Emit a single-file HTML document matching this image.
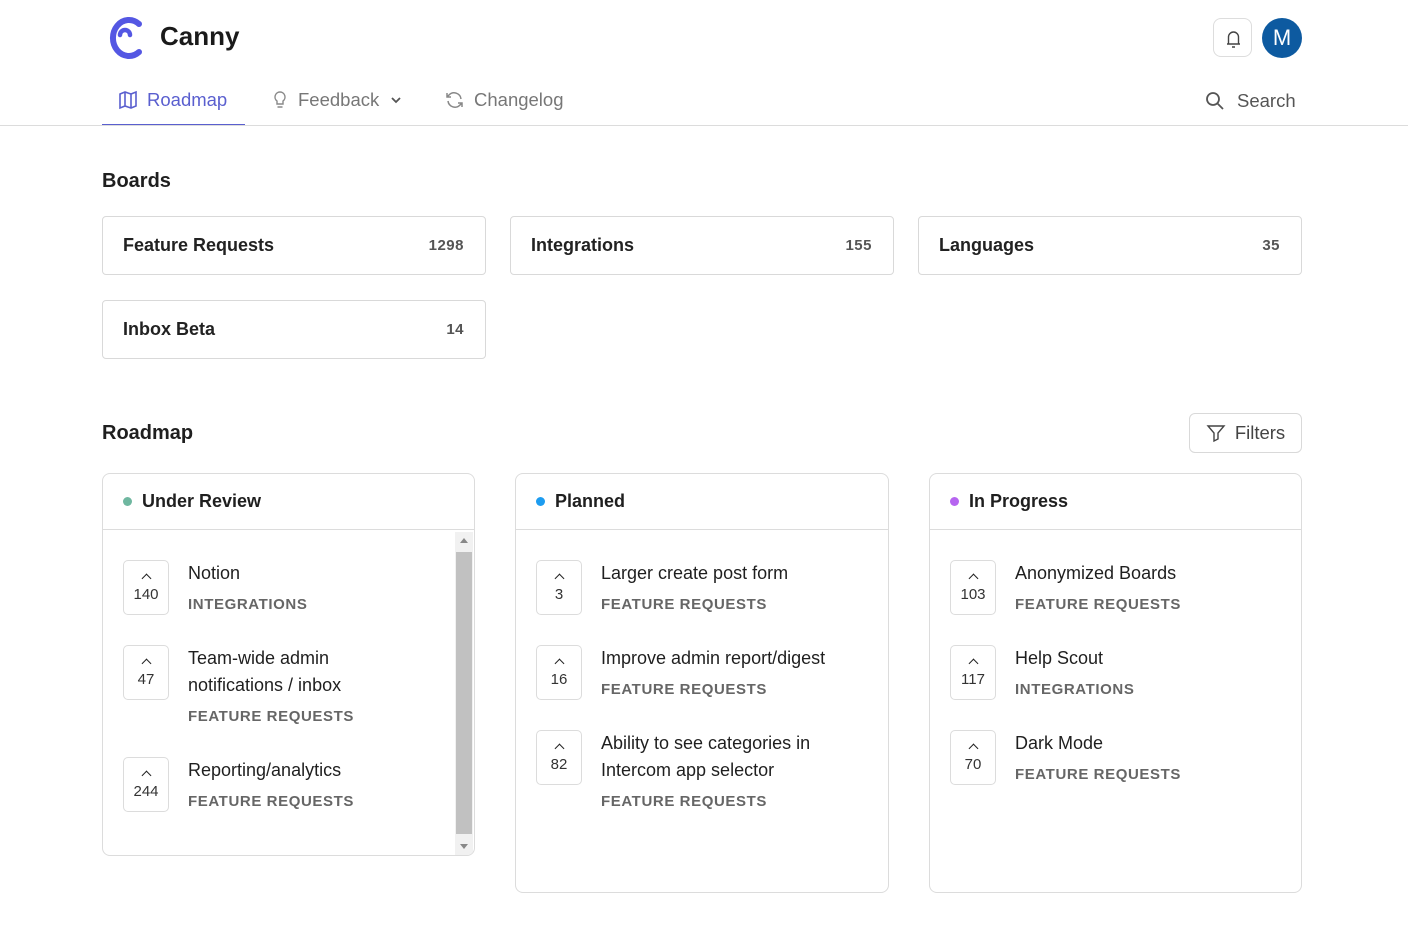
<!DOCTYPE html>
<html><head><meta charset="utf-8"><style>
*{box-sizing:border-box;margin:0;padding:0}
body{width:1408px;height:940px;background:#fff;font-family:"Liberation Sans",sans-serif;color:#1f1f1f;position:relative;overflow:hidden}
.a{position:absolute}
.nav{font-size:18.5px;color:#777;display:flex;align-items:center;gap:9px}
.board{position:absolute;width:384px;height:59px;border:1px solid #d9d9d9;border-radius:4px;display:flex;align-items:center;justify-content:space-between;padding:0 21px 0 20px;font-size:18px;font-weight:600;color:#222}
.board span{font-size:15px;color:#555;font-weight:700;letter-spacing:.5px}
.col{position:absolute;border:1px solid #dcdcdc;border-radius:8px;width:374px;overflow:hidden}
.ch{height:56px;border-bottom:1px solid #dcdcdc;display:flex;align-items:center;padding-left:20px;font-size:18px;font-weight:600;gap:10px}
.dot{width:9px;height:9px;border-radius:50%}
.it{position:absolute;left:20px}
.vote{position:absolute;left:0;top:0;width:46px;height:55px;border:1px solid #dcdcdc;border-radius:5px;text-align:center;font-size:15px;color:#333}
.vote i{display:block;width:7px;height:7px;border-left:1.6px solid #222;border-top:1.6px solid #222;transform:rotate(45deg);margin:14px auto 4px}
.t{position:absolute;left:65px;top:0px;font-size:18px;line-height:27px;color:#1f1f1f;width:260px}
.c{font-size:15px;font-weight:700;letter-spacing:.6px;color:#666;margin-top:8px;line-height:20px}
</style></head><body>
<svg class="a" style="left:105px;top:14px" width="40" height="48" viewBox="0 0 40 48"><path d="M34 10 A16 18 0 1 0 34 38" fill="none" stroke="#5457e3" stroke-width="6" stroke-linecap="round"/><path d="M15 21 A5 5 0 0 1 25 21" fill="none" stroke="#5457e3" stroke-width="4.5" stroke-linecap="round"/></svg>
<div class="a" style="left:160px;top:21px;font-size:26px;font-weight:600;color:#1a1a1a">Canny</div>
<div class="a" style="left:1213px;top:18px;width:39px;height:39px;border:1px solid #ddd;border-radius:8px"><svg width="39" height="39" viewBox="0 0 39 39"><path d="M13 25h13M14.5 25v-7a5 5 0 0 1 10 0v7M18 28h3" fill="none" stroke="#444" stroke-width="1.4"/></svg></div>
<div class="a" style="left:1262px;top:18px;width:40px;height:40px;border-radius:50%;background:#0d5aa0;color:#fff;font-size:22px;text-align:center;line-height:40px">M</div>
<div class="a nav" style="left:118px;top:89px;color:#5a5fcf"><svg width="20" height="20" viewBox="0 0 20 20" fill="none" stroke="#5a5fcf" stroke-width="1.6"><path d="M2 4l5-2 6 2 5-2v14l-5 2-6-2-5 2zM7 2v14M13 4v14"/></svg>Roadmap</div>
<div class="a" style="left:102px;top:124px;width:143px;height:2px;background:#5a5fcf"></div>
<div class="a nav" style="left:271px;top:89px"><svg width="18" height="20" viewBox="0 0 18 20" fill="none" stroke="#888" stroke-width="1.4"><path d="M9 2a5 5 0 0 0-3 9v3h6v-3a5 5 0 0 0-3-9zM6.5 17h5"/></svg>Feedback<svg width="16" height="16" viewBox="0 0 16 16"><path d="M4 6l4 4 4-4" fill="none" stroke="#555" stroke-width="1.8"/></svg></div>
<div class="a nav" style="left:444px;top:89px"><svg width="21" height="20" viewBox="0 0 21 20" fill="none" stroke="#888" stroke-width="1.5"><path d="M17 9a7 7 0 0 0-12-4L3 7M3 3v4h4M4 11a7 7 0 0 0 12 4l2-2M18 17v-4h-4"/></svg>Changelog</div>
<div class="a nav" style="left:1205px;top:90px;color:#555;gap:12px"><svg width="20" height="20" viewBox="0 0 20 20" fill="none" stroke="#555" stroke-width="1.8"><circle cx="8" cy="8" r="6"/><path d="M12.5 12.5L18 18"/></svg>Search</div>
<div class="a" style="left:0;top:125px;width:1408px;height:1px;background:#dcdcdc"></div>
<div class="a" style="left:102px;top:170px;font-size:20px;font-weight:600">Boards</div>
<div class="board" style="left:102px;top:216px">Feature Requests<span>1298</span></div>
<div class="board" style="left:510px;top:216px">Integrations<span>155</span></div>
<div class="board" style="left:918px;top:216px">Languages<span>35</span></div>
<div class="board" style="left:102px;top:300px">Inbox Beta<span>14</span></div>
<div class="a" style="left:102px;top:422px;font-size:20px;font-weight:600">Roadmap</div>
<div class="a nav" style="left:1189px;top:413px;width:113px;height:40px;border:1px solid #d9d9d9;border-radius:6px;justify-content:center;color:#444"><svg width="20" height="20" viewBox="0 0 20 20" fill="none" stroke="#444" stroke-width="1.4"><path d="M2 3h16l-6 7v6l-4 2v-8z"/></svg>Filters</div>

<div class="col" style="left:102px;top:473px;width:373px;height:383px"><div class="ch"><div class="dot" style="background:#6fb7a0"></div>Under Review</div>
<div class="a" style="left:352px;top:58px;width:18px;height:323px;background:#f1f1f1"><div style="position:absolute;left:1px;top:20px;width:16px;height:282px;background:#c1c1c1"></div><div style="position:absolute;left:5px;top:6px;border:4px solid transparent;border-bottom:5px solid #888;border-top:0"></div><div style="position:absolute;left:5px;bottom:6px;border:4px solid transparent;border-top:5px solid #888;border-bottom:0"></div></div>
<div class="it" style="top:86px"><div class="vote"><i></i>140</div><div class="t">Notion<div class="c">INTEGRATIONS</div></div></div>
<div class="it" style="top:171px"><div class="vote"><i></i>47</div><div class="t">Team-wide admin<br>notifications / inbox<div class="c">FEATURE REQUESTS</div></div></div>
<div class="it" style="top:283px"><div class="vote"><i></i>244</div><div class="t">Reporting/analytics<div class="c">FEATURE REQUESTS</div></div></div>
</div>
<div class="col" style="left:515px;top:473px;height:420px"><div class="ch"><div class="dot" style="background:#1d9cf0"></div>Planned</div>
<div class="it" style="top:86px"><div class="vote"><i></i>3</div><div class="t">Larger create post form<div class="c">FEATURE REQUESTS</div></div></div>
<div class="it" style="top:171px"><div class="vote"><i></i>16</div><div class="t">Improve admin report/digest<div class="c">FEATURE REQUESTS</div></div></div>
<div class="it" style="top:256px"><div class="vote"><i></i>82</div><div class="t">Ability to see categories in<br>Intercom app selector<div class="c">FEATURE REQUESTS</div></div></div>
</div>
<div class="col" style="left:929px;top:473px;height:420px;width:373px"><div class="ch"><div class="dot" style="background:#b665f0"></div>In Progress</div>
<div class="it" style="top:86px"><div class="vote"><i></i>103</div><div class="t">Anonymized Boards<div class="c">FEATURE REQUESTS</div></div></div>
<div class="it" style="top:171px"><div class="vote"><i></i>117</div><div class="t">Help Scout<div class="c">INTEGRATIONS</div></div></div>
<div class="it" style="top:256px"><div class="vote"><i></i>70</div><div class="t">Dark Mode<div class="c">FEATURE REQUESTS</div></div></div>
</div>
</body></html>
